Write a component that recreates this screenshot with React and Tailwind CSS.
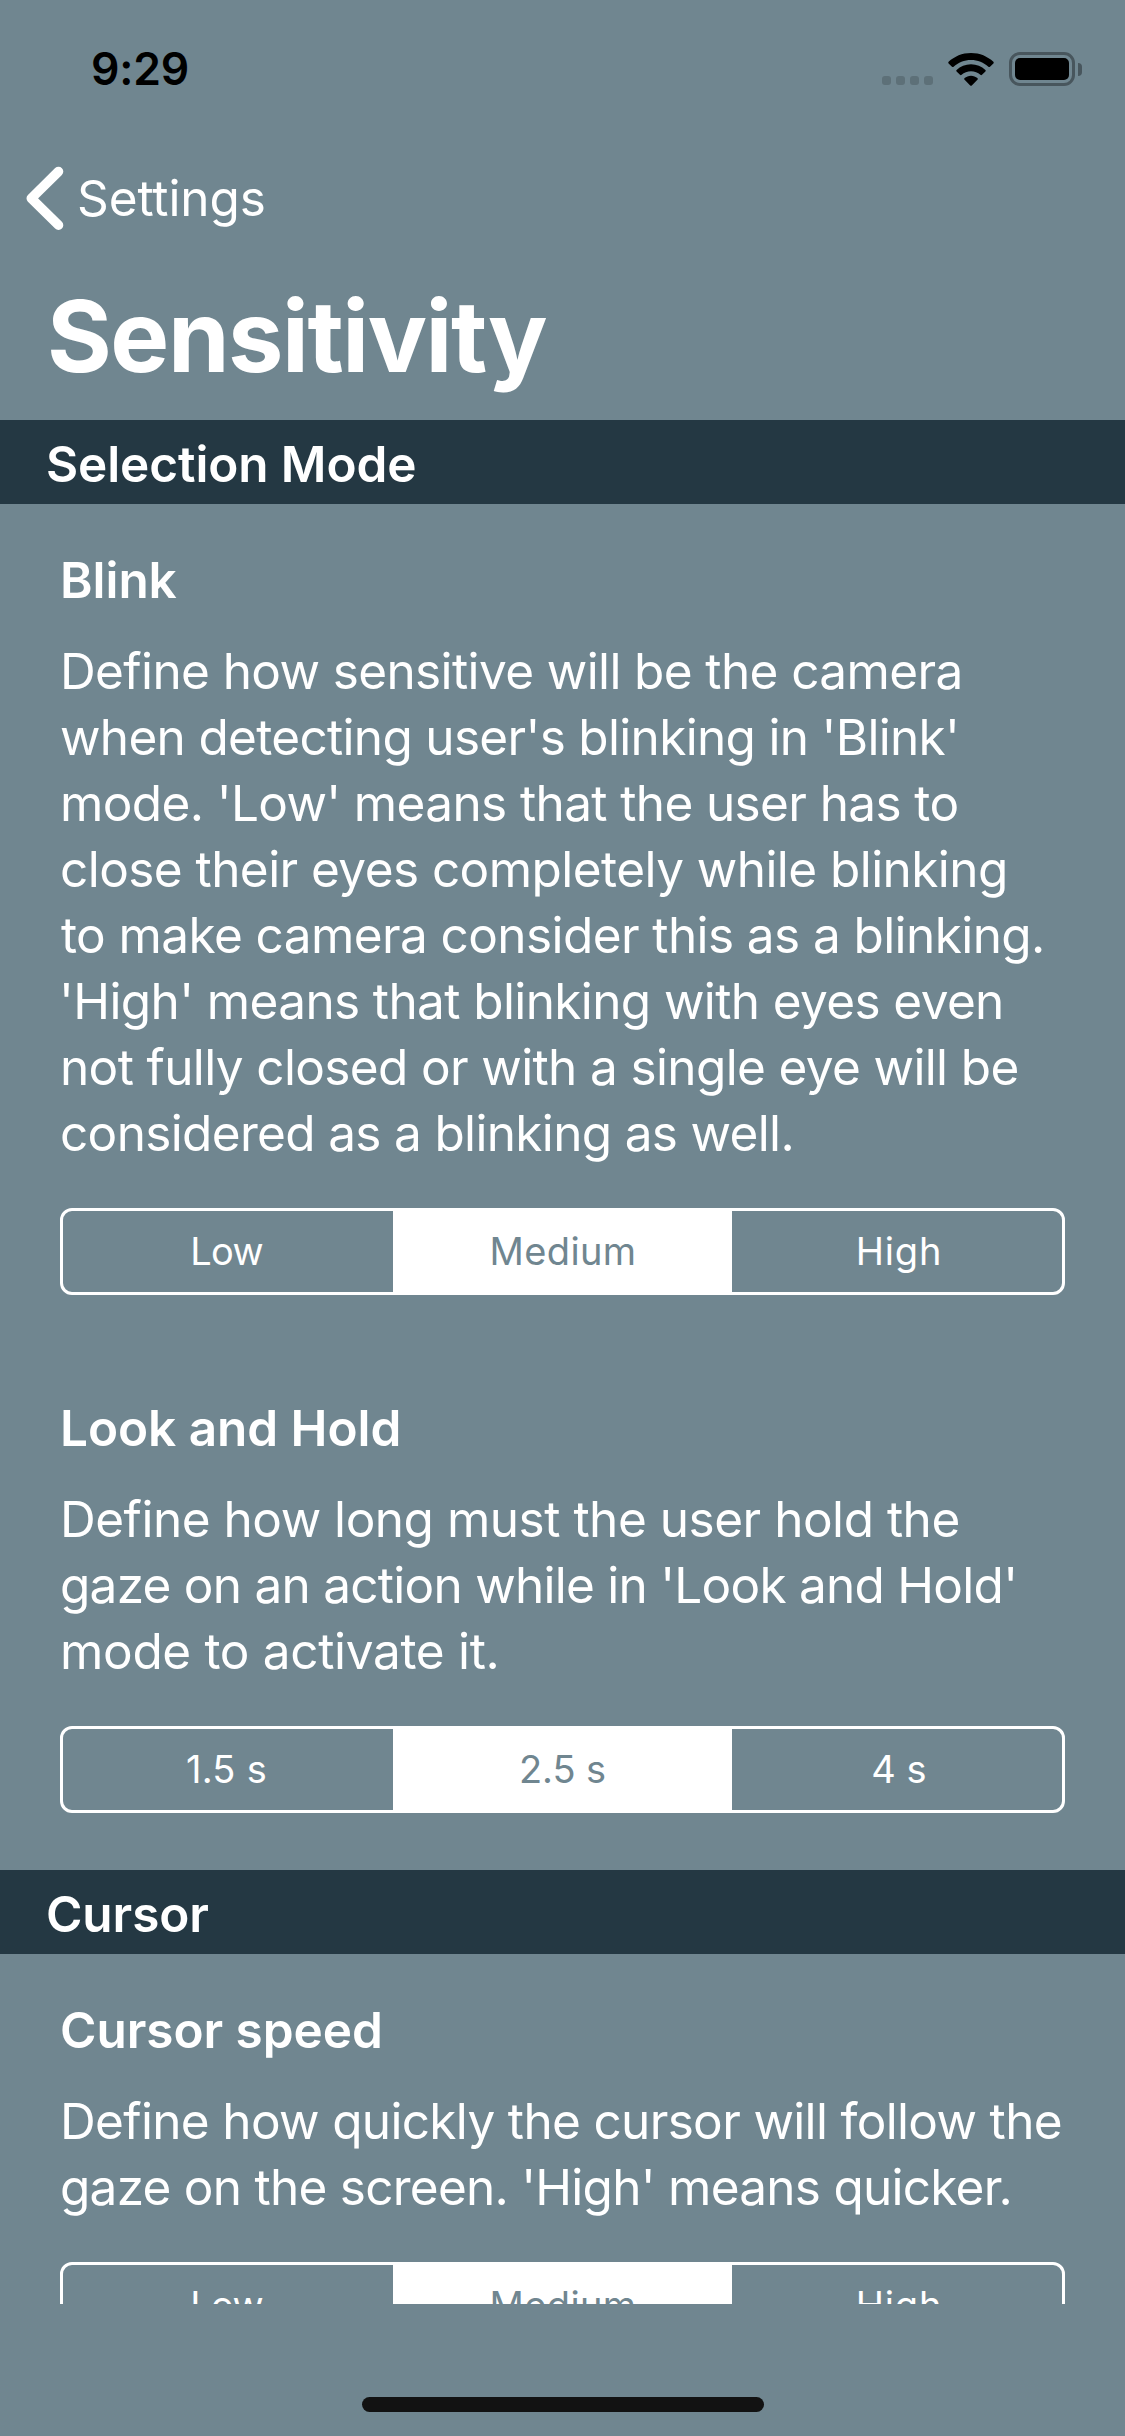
const sections = [
  {
    title: "Selection Mode",
    items: [
      {
        title: "Blink",
        lines: [
          ["Define how sensitive will be the camera", "tracking-[-0.61px]"],
          ["when detecting user's blinking in 'Blink'", "tracking-[-0.68px]"],
          ["mode. 'Low' means that the user has to", "tracking-[-0.62px]"],
          ["close their eyes completely while blinking", "tracking-[-0.558px]"],
          ["to make camera consider this as a blinking.", "tracking-[-0.59px] pl-px"],
          ["'High' means that blinking with eyes even", "tracking-[-0.61px] -ml-px"],
          ["not fully closed or with a single eye will be", "tracking-[-0.634px]"],
          ["considered as a blinking as well.", "tracking-[-0.658px]"],
        ],
        options: [
          ["Low", "tracking-[-0.7px] -ml-[3px]"],
          ["Medium", "tracking-[0.37px] ml-px"],
          ["High", "tracking-[0.8px] ml-[4px]"],
        ],
      },
      {
        title: "Look and Hold",
        lines: [
          ["Define how long must the user hold the", "tracking-[-0.48px]"],
          ["gaze on an action while in 'Look and Hold'", "tracking-[-0.74px]"],
          ["mode to activate it.", "tracking-[-0.329px]"],
        ],
        options: [
          ["1.5 s", "tracking-[0.3px] -ml-[3px]"],
          ["2.5 s", "tracking-[-0.1px]"],
          ["4 s", "tracking-[0px] ml-[4px]"],
        ],
      },
    ],
  },
  {
    title: "Cursor",
    items: [
      {
        title: "Cursor speed",
        lines: [
          ["Define how quickly the cursor will follow the", "tracking-[-0.66px]"],
          ["gaze on the screen. 'High' means quicker.", "tracking-[-0.74px]"],
        ],
        options: [
          ["Low", "tracking-[-0.7px] -ml-[3px]"],
          ["Medium", "tracking-[0.37px] ml-px"],
          ["High", "tracking-[0.8px] ml-[4px]"],
        ],
      },
    ],
  },
];

function StatusBar() {
  return (
    <div className="flex h-[132px] shrink-0 items-center justify-between pt-[6px] pr-[43px] pl-[91px] text-black">
      <span className="text-[44.5px] leading-none font-semibold tracking-[-0.2px]">9:29</span>
      <div className="flex items-center">
        <div className="mt-[23px] flex gap-[5px]">
          {[0, 1, 2, 3].map((i) => (
            <span key={i} className="size-[9px] rounded-[3px] bg-[#5d7078]" />
          ))}
        </div>
        <svg className="ml-[15px] h-[33px] w-[46px]" viewBox="0 0 46 33" fill="currentColor">
          <path d="M23 0C31.800 0 39.600 3.400 45.400 8.800Q46.100 9.600 45.400 10.400L42 13.700Q41.200 14.400 40.400 13.700C35.800 9.500 29.700 6.900 23 6.900S10.200 9.500 5.600 13.700Q4.800 14.400 4 13.700L0.600 10.400Q-0.100 9.600 0.600 8.800C6.400 3.400 14.200 0 23 0Z" />
          <path d="M23 11.300C28.600 11.300 33.600 13.400 37.400 16.900Q38.200 17.700 37.400 18.500L34 21.800Q33.200 22.500 32.400 21.800C29.900 19.600 26.600 18.200 23 18.200S16.100 19.600 13.600 21.800Q12.800 22.500 12 21.800L8.600 18.500Q7.800 17.700 8.600 16.900C12.400 13.400 17.400 11.300 23 11.300Z" />
          <path d="M23 22.700C25.500 22.700 27.700 23.600 29.400 25.100Q30.200 25.900 29.400 26.700L23.800 32.400Q23 33.100 22.200 32.400L16.600 26.700Q15.800 25.900 16.600 25.100C18.300 23.600 20.500 22.700 23 22.700Z" />
        </svg>
        <div className="ml-[15px] h-[34px] w-[66px] rounded-[11px] border-3 border-[#48565d] p-[3px]">
          <div className="h-full rounded-[5px] bg-black" />
        </div>
        <span className="ml-[3px] h-[13px] w-[4px] rounded-r-full bg-[#48565d]" />
      </div>
    </div>
  );
}

function SegmentedControl({ options }) {
  return (
    <div className="mt-[42px] grid h-[87px] grid-cols-[330px_339px_330px] overflow-hidden rounded-[12px] border-3 border-white text-[38px]">
      {options.map(([label, tracking], i) => (
        <div
          key={i}
          className={
            i === 1
              ? "flex items-center justify-center bg-white text-[#708690]"
              : "flex items-center justify-center"
          }
        >
          <span className={tracking}>{label}</span>
        </div>
      ))}
    </div>
  );
}

function Setting({ title, lines, options }) {
  return (
    <div className="px-[60px] pt-[46px] pb-[57px]">
      <h3 className="text-[49.5px] leading-[60px] font-semibold tracking-[-0.05px]">{title}</h3>
      <p className="mt-[28px] text-[49.5px] leading-[66px] whitespace-nowrap">
        {lines.map(([text, style]) => (
          <span key={text} className={`block ${style}`}>
            {text}
          </span>
        ))}
      </p>
      <SegmentedControl options={options} />
    </div>
  );
}

export default function App() {
  return (
    <div className="flex h-[2436px] w-[1125px] flex-col overflow-hidden bg-[#708690] font-[Inter,sans-serif] text-white">
      <StatusBar />
      <nav className="flex h-[132px] shrink-0 items-center pl-[24px]">
        <svg className="h-[68px] w-[42px]" viewBox="0 0 42 68" fill="none" stroke="currentColor">
          <path d="M34.500 7.500L7.300 34.300L34.500 61.200" strokeWidth="9.600" strokeLinecap="round" strokeLinejoin="round" />
        </svg>
        <span className="ml-[11px] text-[49.5px] tracking-[-0.1px]">Settings</span>
      </nav>
      <h1 className="mt-[12px] h-[144px] shrink-0 pl-[47px] text-[99px] leading-[120px] font-bold tracking-[-1.45px]">
        Sensitivity
      </h1>
      <main className="h-[1884px] shrink-0 overflow-hidden">
        {sections.map((section) => (
          <section key={section.title}>
            <h2 className="flex h-[84px] items-center bg-[#243843] pt-[4px] pl-[46px] text-[49.5px] font-semibold tracking-[-0.1px]">
              {section.title}
            </h2>
            {section.items.map((item) => (
              <Setting key={item.title} {...item} />
            ))}
          </section>
        ))}
      </main>
      <div className="mt-[93px] h-[15px] w-[402px] shrink-0 self-center rounded-full bg-[#121212]" />
    </div>
  );
}
